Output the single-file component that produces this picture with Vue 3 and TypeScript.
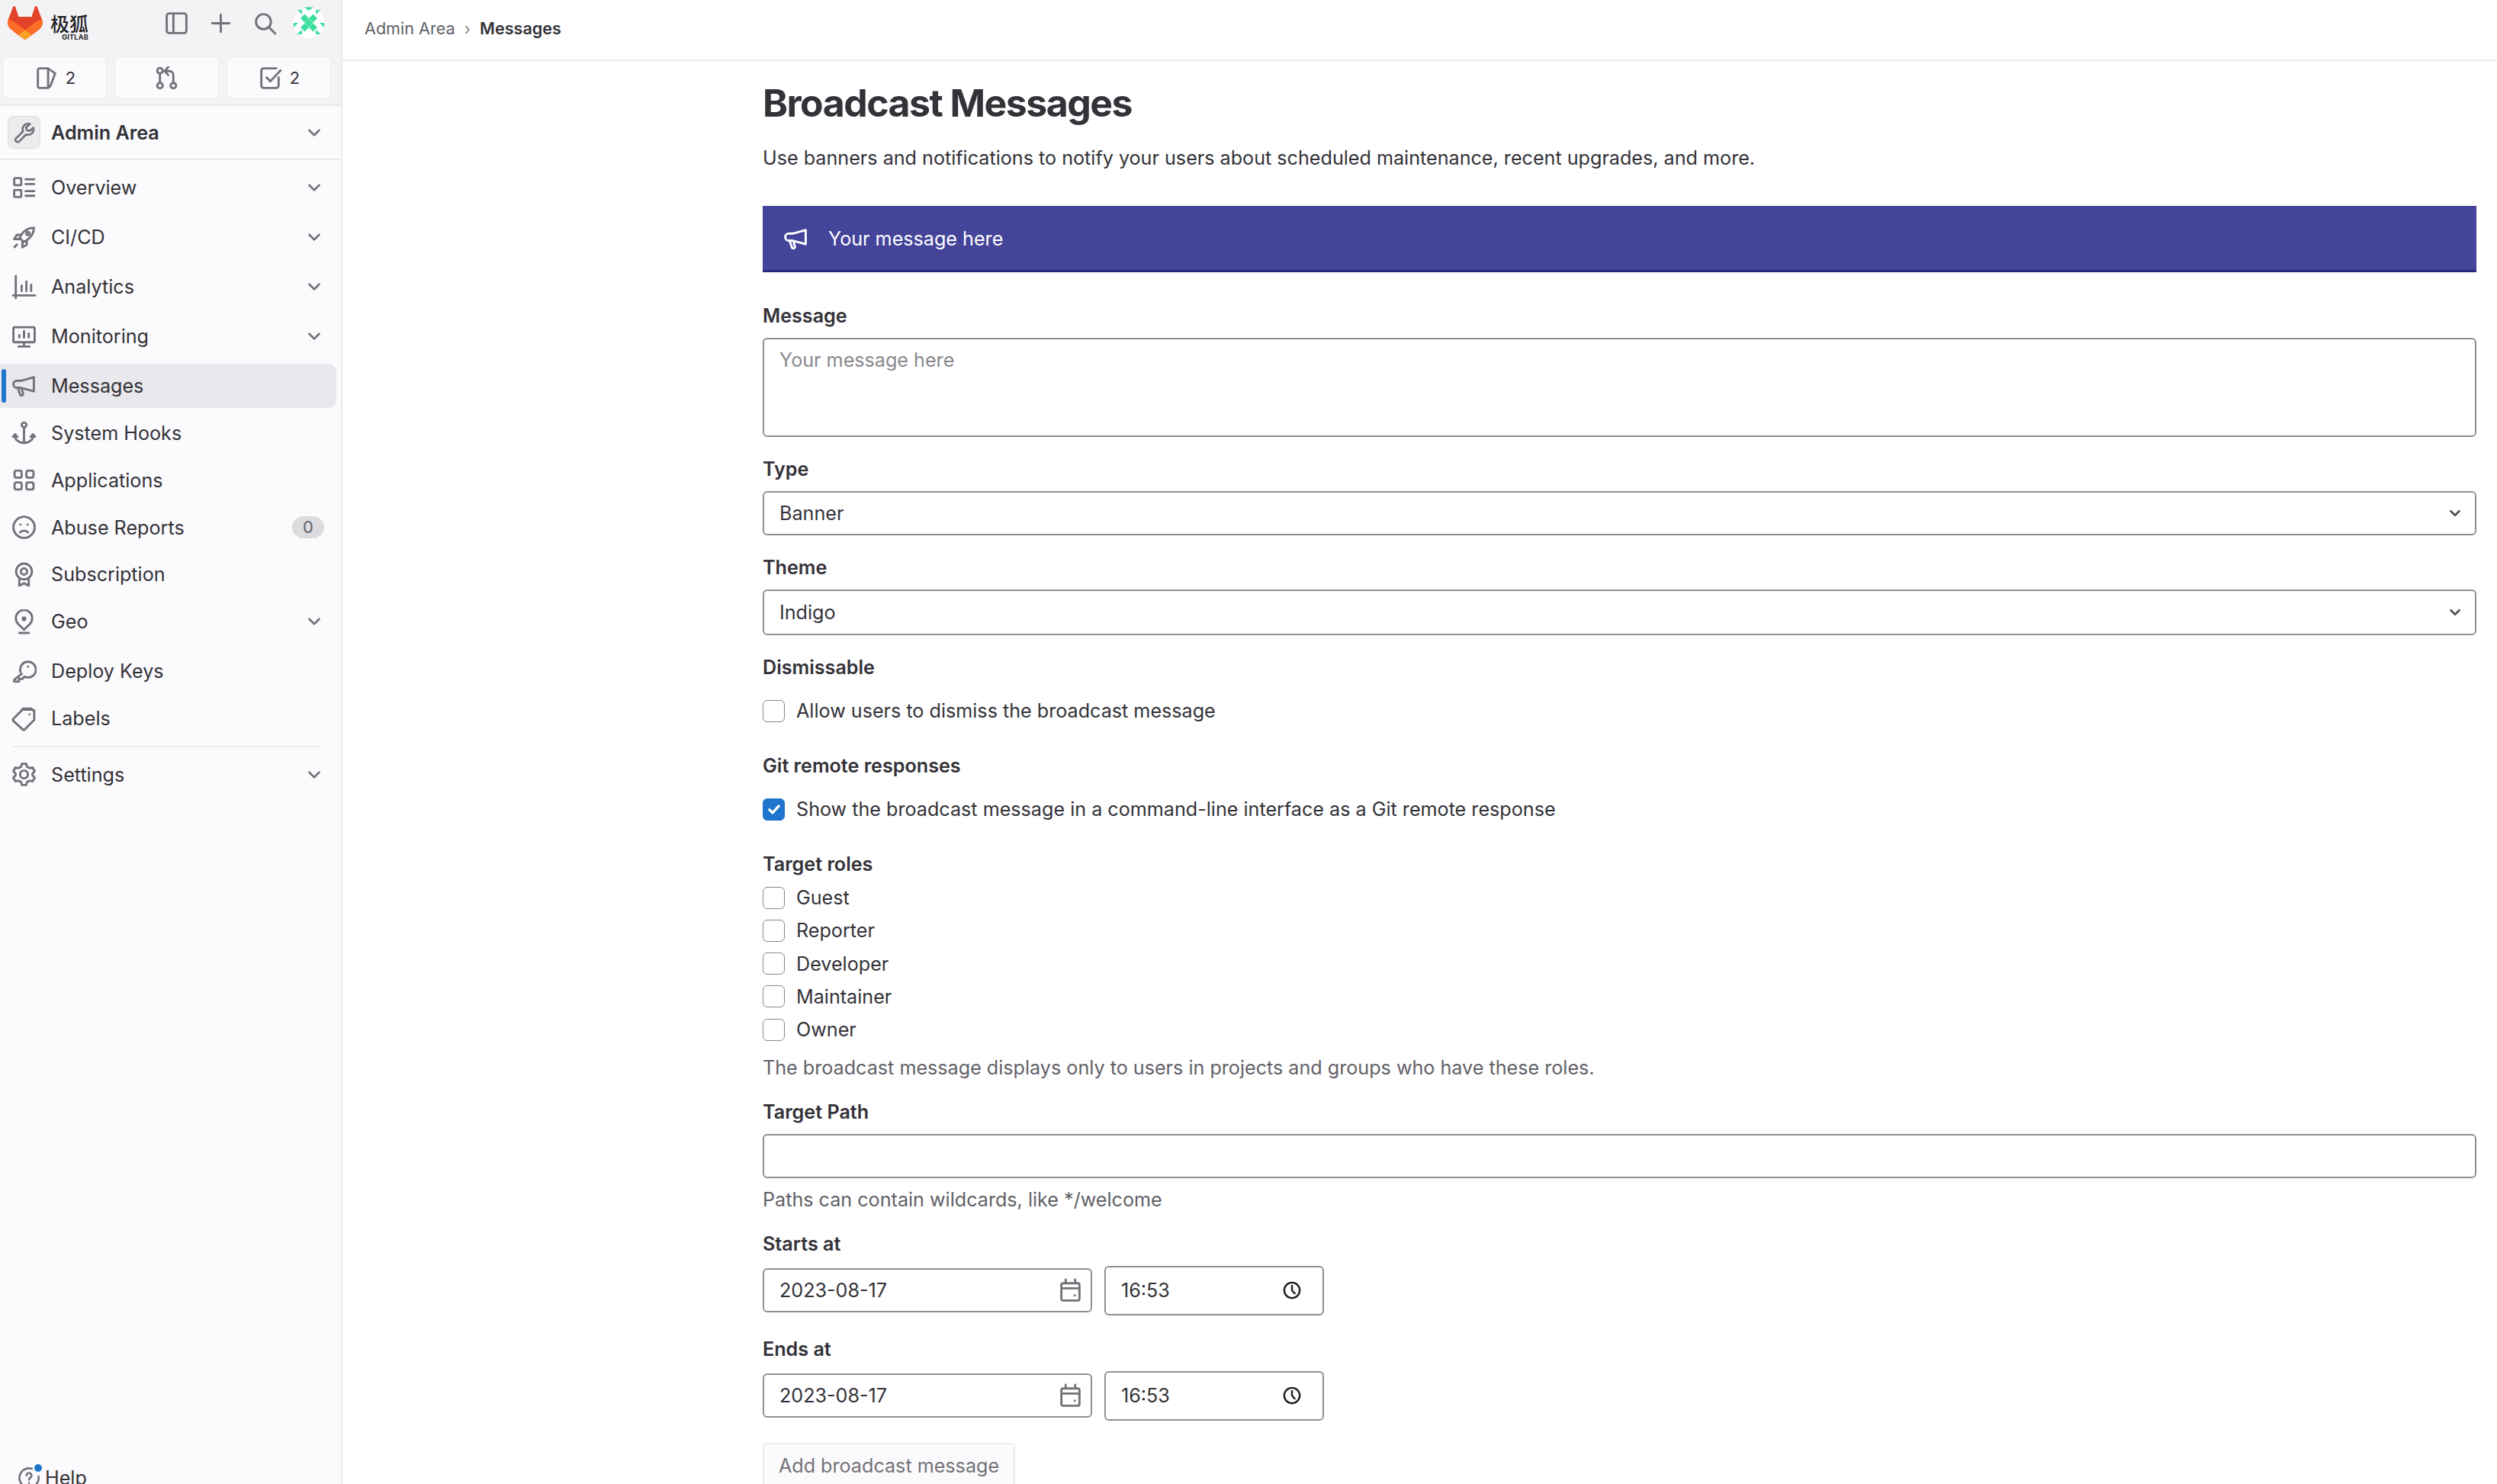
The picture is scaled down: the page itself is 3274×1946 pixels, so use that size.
<script setup lang="ts">
// small helpers so the icon table below stays readable
const rr = (x: number, y: number, w: number, h: number, r: number) =>
  `M${x + r} ${y}h${w - 2 * r}a${r} ${r} 0 0 1 ${r} ${r}v${h - 2 * r}a${r} ${r} 0 0 1-${r} ${r}h-${w - 2 * r}a${r} ${r} 0 0 1-${r}-${r}v-${h - 2 * r}a${r} ${r} 0 0 1 ${r}-${r}Z`
const circ = (cx: number, cy: number, r: number) =>
  `M${cx - r} ${cy}a${r} ${r} 0 1 0 ${2 * r} 0a${r} ${r} 0 1 0-${2 * r} 0Z`

const icons: Record<string, string> = {
  sidebar: rr(1.75, 1.75, 12.5, 12.5, 1.5) + 'M6 2v12',
  plus: 'M8 2.5v11M2.5 8h11',
  search: circ(7, 7, 4.75) + 'M10.5 10.5l4 4',
  issues: 'M3.75 1.75h5.5v12.5h-5.5a1 1 0 0 1-1-1V2.75a1 1 0 0 1 1-1ZM9.25 1.9l4.5 3-3 8-1.5 1.3',
  merge: circ(3.75, 3.25, 1.75) + circ(3.75, 12.75, 1.75) + circ(12.25, 12.75, 1.75) + 'M3.75 5v6M12.25 11V6a2.5 2.5 0 0 0-2.5-2.5H7.5M9 1 6.75 3.5 9 6',
  todo: 'M13.25 7.5v5.25a1.5 1.5 0 0 1-1.5 1.5h-8a1.5 1.5 0 0 1-1.5-1.5v-9.5a1.5 1.5 0 0 1 1.5-1.5h8M5.5 7.5 8 10l6.5-7',
  wrench: 'M10.5 1.75a3.75 3.75 0 0 0-3.4 5.3L2 12.1a1.6 1.6 0 0 0 2.2 2.2l5-5.1a3.75 3.75 0 0 0 5-4.7l-2.5 2.3-2-.5-.5-2L12 1.9a3.7 3.7 0 0 0-1.5-.15Z',
  overview: rr(1.75, 1.75, 4.5, 4.5, 0.5) + rr(1.75, 9.25, 4.5, 4.5, 0.5) + 'M9 2.5h5.5M9 5.5h5.5M9 10h5.5M9 13h5.5',
  rocket: 'M14.25 1.75c-3.5 0-6 1.5-8 4.5l-1 2 2.5 2.5 2-1c3-2 4.5-4.5 4.5-8ZM6.25 6.25H3.5L1.75 9h3.5M9.75 9.75v2.75L7 14.25v-3.5M2 14l1.5-1.5' + circ(10.5, 5.5, 1),
  chart: 'M2.75 1v14M1 13.25h14M6.5 7v3.5M9.5 4.5v6M12.5 6.5v4',
  monitor: rr(1.25, 2, 13.5, 9.5, 0.5) + 'M8 11.5v2.5M4.5 14.25h7M5 8.5V7M8 8.5V4.5M11 8.5V6',
  bullhorn: 'M14.25 2.25v9L6 9H3.5a2.25 2.25 0 0 1 0-4.5H6ZM4 9l1.5 4.25a1 1 0 0 0 1.9-.6L6.5 9.5',
  anchor: circ(8, 3, 1.5) + 'M8 4.5v10M2.25 9v1a5.75 4.5 0 0 0 11.5 0V9M1 10.5 2.25 9l1.5 1.5M12.25 10.5 13.75 9 15 10.5',
  apps: rr(2, 2, 4.5, 4.5, 1) + rr(9.5, 2, 4.5, 4.5, 1) + rr(2, 9.5, 4.5, 4.5, 1) + rr(9.5, 9.5, 4.5, 4.5, 1),
  sad: circ(8, 8, 6.75) + 'M5.5 11.25c1.2-1.5 3.8-1.5 5 0M5.75 6.25h.01M10.25 6.25h.01',
  license: circ(8, 6, 5) + circ(8, 6, 2) + 'M5 10.5V15l3-1.5 3 1.5v-4.5',
  location: 'M8 13 4.2 9.2a5.2 5.2 0 1 1 7.6 0ZM5 15h6' + circ(8, 6, 0.8),
  key: 'M6.5 9.5 1.75 13.25v1.25h3v-1.75h2.25l1.25-1.5a5 5 0 1 0-2.5-3M10.5 5h.01',
  labels: 'M1.25 8 7 2.25h6.5a1 1 0 0 1 1 1v5.5L8.5 14.75a1 1 0 0 1-1.4 0L1.25 9.4a1 1 0 0 1 0-1.4ZM6.5 2.5l1-1h5l1 1M11.5 5.25h.01',
  settings: 'M6.6 1.25h2.8l.5 1.9 1.6.9 1.9-.5 1.4 2.4-1.4 1.4v1.3l1.4 1.4-1.4 2.4-1.9-.5-1.6.9-.5 1.9H6.6l-.5-1.9-1.6-.9-1.9.5-1.4-2.4 1.4-1.4V7.35L1.2 5.95l1.4-2.4 1.9.5 1.6-.9Z' + circ(8, 8, 2.5),
  help: 'M10 1.6A6.75 6.75 0 1 0 14.7 7M6.25 6.25a1.75 1.75 0 1 1 2.7 1.5c-.6.4-.95.8-.95 1.5M8 11.5h.01',
  chevron: 'M4 6l4 4 4-4',
  calendar: rr(2.25, 3.25, 11.5, 11, 1) + 'M2.25 6.5h11.5M5 1v2.25M11 1v2.25M10.75 11h.01',
  clock: circ(8, 8, 6.25) + 'M8 4.25V8l2.25 2.5',
}

type NavItem = { label: string; icon: string; more?: boolean; active?: boolean; count?: number }

const navItems: NavItem[] = [
  { label: 'Overview', icon: 'overview', more: true },
  { label: 'CI/CD', icon: 'rocket', more: true },
  { label: 'Analytics', icon: 'chart', more: true },
  { label: 'Monitoring', icon: 'monitor', more: true },
  { label: 'Messages', icon: 'bullhorn', active: true },
  { label: 'System Hooks', icon: 'anchor' },
  { label: 'Applications', icon: 'apps' },
  { label: 'Abuse Reports', icon: 'sad', count: 0 },
  { label: 'Subscription', icon: 'license' },
  { label: 'Geo', icon: 'location', more: true },
  { label: 'Deploy Keys', icon: 'key' },
  { label: 'Labels', icon: 'labels' },
]

const roles = ['Guest', 'Reporter', 'Developer', 'Maintainer', 'Owner']

const schedule = [
  { label: 'Starts at', date: '2023-08-17', time: '16:53' },
  { label: 'Ends at', date: '2023-08-17', time: '16:53' },
]

const avatarDiamonds = [
  [404, 30], [398.5, 24], [409.5, 24], [398.5, 36], [409.5, 36],
]
const diamond = (x: number, y: number, s = 5.5) =>
  `${x},${y - s} ${x + s},${y} ${x},${y + s} ${x - s},${y}`
</script>

<template>
  <div class="page">
    <aside class="sidebar">
      <div class="sidebar-top">
        <div class="brand-row">
          <a class="brand">
            <svg class="tanuki" viewBox="0 0 25 24">
              <path d="m24.507 9.5-.034-.09L21.082.562a.896.896 0 0 0-1.694.091l-2.29 7.01H7.825L5.535.653a.898.898 0 0 0-1.694-.09L.451 9.411.416 9.5a6.297 6.297 0 0 0 2.09 7.278l.012.01.03.022 5.16 3.867 2.56 1.935 1.554 1.176a1.051 1.051 0 0 0 1.268 0l1.555-1.176 2.56-1.935 5.197-3.89.014-.01A6.297 6.297 0 0 0 24.507 9.5Z" fill="#e24329" />
              <path d="m24.507 9.5-.034-.09a11.44 11.44 0 0 0-4.56 2.051l-7.447 5.632 4.742 3.584 5.197-3.89.014-.01A6.297 6.297 0 0 0 24.507 9.5Z" fill="#fc6d26" />
              <path d="m7.707 20.677 2.56 1.935 1.555 1.176a1.051 1.051 0 0 0 1.268 0l1.555-1.176 2.56-1.935-4.743-3.584-4.755 3.584Z" fill="#fca326" />
              <path d="M5.01 11.461a11.43 11.43 0 0 0-4.56-2.05L.416 9.5a6.297 6.297 0 0 0 2.09 7.278l.012.01.03.022 5.16 3.867 4.745-3.584-7.444-5.632Z" fill="#fc6d26" />
            </svg>
            <span class="brand-text">
              <span class="brand-cn">极狐</span>
              <span class="brand-en">GITLAB</span>
            </span>
          </a>
          <div class="brand-actions">
            <svg class="icon" viewBox="0 0 16 16"><path :d="icons.sidebar" /></svg>
            <svg class="icon" viewBox="0 0 16 16"><path :d="icons.plus" /></svg>
            <svg class="icon" viewBox="0 0 16 16"><path :d="icons.search" /></svg>
            <svg class="avatar" viewBox="383 9 42 42">
              <circle cx="404" cy="30" r="21" fill="#fff" stroke="#e8e7eb" stroke-width="0.5" />
              <polygon v-for="(d, i) in avatarDiamonds" :key="i" :points="diamond(d[0], d[1])" fill="#3adf9e" />
              <polygon points="398,9.5 410,9.5 404,14" fill="#3adf9e" />
              <polygon points="389,13 395,13 395,19" fill="#3adf9e" />
              <polygon points="413,13 419,13 413,19" fill="#3adf9e" />
              <polygon points="384,30 390,30 384,36" fill="#3adf9e" />
              <polygon points="418,30 424,30 424,36" fill="#3adf9e" />
              <polygon points="388,45 395,45 395,39" fill="#3adf9e" />
              <polygon points="413,39 420,45 413,45" fill="#3adf9e" />
            </svg>
          </div>
        </div>
        <div class="counters">
          <button class="counter">
            <svg class="icon" viewBox="0 0 16 16"><path :d="icons.issues" /></svg><span>2</span>
          </button>
          <button class="counter">
            <svg class="icon" viewBox="0 0 16 16"><path :d="icons.merge" /></svg>
          </button>
          <button class="counter">
            <svg class="icon" viewBox="0 0 16 16"><path :d="icons.todo" /></svg><span>2</span>
          </button>
        </div>
      </div>

      <div class="context">
        <span class="context-icon">
          <svg class="icon" viewBox="0 0 16 16"><path :d="icons.wrench" /></svg>
        </span>
        <span class="context-title">Admin Area</span>
        <svg class="chev" viewBox="0 0 16 16"><path :d="icons.chevron" /></svg>
      </div>

      <nav class="nav">
        <a v-for="item in navItems" :key="item.label" class="nav-row"
          :class="{ 'is-active': item.active, 'has-more': item.more }">
          <svg class="icon" viewBox="0 0 16 16"><path :d="icons[item.icon]" /></svg>
          <span class="nav-label">{{ item.label }}</span>
          <svg v-if="item.more" class="chev" viewBox="0 0 16 16"><path :d="icons.chevron" /></svg>
          <span v-if="item.count !== undefined" class="badge">{{ item.count }}</span>
        </a>
        <div class="nav-divider"></div>
        <a class="nav-row has-more">
          <svg class="icon" viewBox="0 0 16 16"><path :d="icons.settings" /></svg>
          <span class="nav-label">Settings</span>
          <svg class="chev" viewBox="0 0 16 16"><path :d="icons.chevron" /></svg>
        </a>
      </nav>

      <div class="help">
        <svg class="icon" viewBox="0 0 16 16"><path :d="icons.help" /></svg>
        <span class="help-dot"></span>
        <span>Help</span>
      </div>
    </aside>

    <div class="main">
      <header class="topbar">
        <span class="crumb">Admin Area</span>
        <span class="crumb-sep">›</span>
        <span class="crumb-current">Messages</span>
      </header>

      <div class="content">
        <h1>Broadcast Messages</h1>
        <p class="lead">Use banners and notifications to notify your users about scheduled maintenance, recent upgrades, and more.</p>

        <div class="banner">
          <svg class="icon" viewBox="0 0 16 16"><path :d="icons.bullhorn" /></svg>
          <span>Your message here</span>
        </div>

        <label class="field-label first">Message</label>
        <textarea class="text-area" placeholder="Your message here"></textarea>

        <label class="field-label">Type</label>
        <div class="select-box">
          <span>Banner</span>
          <svg class="select-chev" viewBox="0 0 16 16"><path :d="icons.chevron" /></svg>
        </div>

        <label class="field-label">Theme</label>
        <div class="select-box tall">
          <span>Indigo</span>
          <svg class="select-chev" viewBox="0 0 16 16"><path :d="icons.chevron" /></svg>
        </div>

        <label class="field-label">Dismissable</label>
        <div class="check-row spaced">
          <span class="check"></span>
          <span>Allow users to dismiss the broadcast message</span>
        </div>

        <label class="field-label wide">Git remote responses</label>
        <div class="check-row spaced">
          <span class="check checked">
            <svg viewBox="0 0 16 16"><path d="M3.5 8.5 6.5 11.5 12.5 5" /></svg>
          </span>
          <span>Show the broadcast message in a command-line interface as a Git remote response</span>
        </div>

        <label class="field-label wide roles-label">Target roles</label>
        <div class="roles">
          <div v-for="role in roles" :key="role" class="check-row">
            <span class="check"></span>
            <span>{{ role }}</span>
          </div>
        </div>
        <p class="hint roles-hint">The broadcast message displays only to users in projects and groups who have these roles.</p>

        <label class="field-label path-label">Target Path</label>
        <input class="text-input" type="text" />
        <p class="hint path-hint">Paths can contain wildcards, like */welcome</p>

        <template v-for="(row, i) in schedule" :key="row.label">
          <label class="field-label" :class="i === 0 ? 'path-label' : 'ends-label'">{{ row.label }}</label>
          <div class="date-row">
            <div class="date-box">
              <span>{{ row.date }}</span>
              <svg class="icon" viewBox="0 0 16 16"><path :d="icons.calendar" /></svg>
            </div>
            <div class="time-box">
              <span>{{ row.time }}</span>
              <svg class="clock" viewBox="0 0 16 16"><path :d="icons.clock" /></svg>
            </div>
          </div>
        </template>

        <button class="submit" disabled>Add broadcast message</button>
      </div>
    </div>
  </div>
</template>

<style>
html,
body {
  margin: 0;
  background: #fff;
}
</style>

<style scoped>
.page {
  display: flex;
  height: 1946px;
  overflow: hidden;
  font-family: Inter, "Noto Sans", sans-serif;
  font-size: 25.15px;
  line-height: 36px;
  color: #333238;
}

.icon {
  width: 33px;
  height: 33px;
  flex: none;
  fill: none;
  stroke: #737278;
  stroke-width: 1.4;
  stroke-linecap: round;
  stroke-linejoin: round;
}

.chev {
  width: 26px;
  height: 26px;
  margin-left: auto;
  flex: none;
  fill: none;
  stroke: #737278;
  stroke-width: 1.6;
  stroke-linecap: round;
  stroke-linejoin: round;
}

/* sidebar */
.sidebar {
  width: 449px;
  flex: none;
  display: flex;
  flex-direction: column;
  background: #fbfafd;
  border-right: 2px solid #ececef;
  box-sizing: border-box;
}

.sidebar-top {
  background: #f3f2f5;
  height: 139px;
  border-bottom: 2px solid #e8e7eb;
  padding: 8px 5px 0 3px;
  box-sizing: border-box;
}

.brand-row {
  display: flex;
  align-items: center;
  height: 44px;
}

.brand {
  display: flex;
  align-items: center;
  gap: 10px;
  margin-left: 7px;
}

.tanuki {
  width: 46px;
  height: 44px;
}

.brand-text {
  display: flex;
  flex-direction: column;
  align-items: flex-end;
  width: 50px;
  color: #1f1e24;
  margin-top: 8px;
}

.brand-cn {
  font-family: "Noto Sans CJK SC", sans-serif;
  font-weight: 500;
  font-size: 25px;
  line-height: 28px;
}

.brand-en {
  font-size: 9px;
  font-weight: 700;
  line-height: 9px;
  letter-spacing: 0.3px;
}

.brand-actions {
  display: flex;
  align-items: center;
  margin-left: 99px;
  gap: 25px;
}

.brand-actions .avatar {
  width: 42px;
  height: 42px;
  margin-left: -5px;
}

.counters {
  display: flex;
  gap: 10px;
  margin-top: 22px;
}

.counter {
  width: 137px;
  height: 56px;
  display: flex;
  align-items: center;
  justify-content: center;
  gap: 9px;
  padding: 0;
  font: inherit;
  font-size: 22px;
  color: inherit;
  background: #fbfafd;
  border: 1px solid #ececef;
  border-radius: 8px;
}

.context {
  height: 71px;
  display: flex;
  align-items: center;
  gap: 14px;
  padding: 0 22px 0 10px;
  border-bottom: 2px solid #e8e7eb;
  box-sizing: border-box;
  font-weight: 600;
}

.context-icon {
  width: 43px;
  height: 43px;
  display: flex;
  align-items: center;
  justify-content: center;
  background: #ececef;
  border: 1px solid #dcdcde;
  border-radius: 8px;
  box-sizing: border-box;
}

.context-icon .icon {
  width: 30px;
  height: 30px;
}

.nav {
  padding: 7px 6px 0 0;
  display: flex;
  flex-direction: column;
}

.nav-row {
  position: relative;
  height: 58px;
  display: flex;
  align-items: center;
  gap: 19px;
  padding: 0 16px 0 15px;
  margin-bottom: 3.85px;
  border-radius: 0 10px 10px 0;
}

.nav-row.has-more {
  margin-bottom: 7px;
}

.nav-row.is-active {
  background: #e9e8ec;
}

.nav-row.is-active::before {
  content: "";
  position: absolute;
  left: 2px;
  top: 7px;
  bottom: 7px;
  width: 6px;
  border-radius: 3px;
  background: #1f75cb;
}

.badge {
  margin-left: auto;
  width: 42px;
  height: 29px;
  line-height: 29px;
  border-radius: 15px;
  background: #dcdcde;
  color: #626168;
  font-size: 22px;
  text-align: center;
}

.nav-divider {
  height: 2px;
  background: #ececef;
  margin: 3px 22px 7px 17px;
}

.help {
  position: relative;
  margin-top: auto;
  margin-bottom: -10px;
  height: 36px;
  display: flex;
  align-items: center;
  gap: 6px;
  padding-left: 23px;
}

.help .icon {
  width: 30px;
  height: 30px;
}

.help-dot {
  position: absolute;
  left: 45px;
  top: 0;
  width: 10px;
  height: 10px;
  border-radius: 50%;
  background: #1f75cb;
}

/* main column */
.main {
  flex: 1;
  min-width: 0;
}

.topbar {
  height: 80px;
  display: flex;
  align-items: center;
  gap: 12px;
  padding-left: 29px;
  padding-bottom: 4px;
  border-bottom: 2px solid #e8e7eb;
  box-sizing: border-box;
  font-size: 21.6px;
}

.crumb {
  color: #626168;
}

.crumb-sep {
  color: #89888d;
}

.crumb-current {
  font-weight: 600;
}

.content {
  padding: 0 27px 0 551px;
}

h1 {
  margin: 25px 0 0;
  font-size: 50px;
  line-height: 60px;
  font-weight: 700;
  letter-spacing: -1.55px;
}

.lead {
  margin: 24px 0 0;
}

.banner {
  margin-top: 45px;
  height: 87px;
  display: flex;
  align-items: center;
  gap: 26px;
  padding: 2px 0 0 27px;
  background: #43449a;
  border-bottom: 3px solid #2a2b7a;
  box-sizing: border-box;
  color: #fff;
}

.banner .icon {
  stroke: #fff;
}

.field-label {
  display: block;
  margin: 24px 0 11px;
  font-weight: 600;
}

.field-label.first {
  margin-top: 39px;
}

.field-label.wide {
  margin-top: 36px;
}

.field-label.roles-label {
  margin-bottom: 8px;
}

.field-label.path-label {
  margin-top: 22px;
}

.field-label.ends-label {
  margin-top: 26px;
}

.text-area,
.text-input,
.select-box,
.date-box,
.time-box {
  width: 100%;
  box-sizing: border-box;
  border: 2px solid #908f94;
  border-radius: 6px;
  background: #fff;
  font: inherit;
  color: inherit;
  outline: none;
}

.text-area {
  display: block;
  height: 130px;
  padding: 9px 20px;
  resize: none;
}

.text-area::placeholder {
  color: #89888d;
  opacity: 1;
}

.text-input {
  display: block;
  height: 58px;
}

.select-box {
  height: 58px;
  display: flex;
  align-items: center;
  justify-content: space-between;
  padding: 0 15px 0 20px;
}

.select-box.tall {
  height: 60px;
}

.select-chev {
  width: 22px;
  height: 22px;
  fill: none;
  stroke: #535158;
  stroke-width: 2;
  stroke-linecap: round;
  stroke-linejoin: round;
}

.check-row {
  display: flex;
  align-items: center;
  gap: 15px;
  height: 36px;
  margin-bottom: 7.3px;
}

.check-row.spaced {
  margin-top: 21px;
  margin-bottom: 0;
}

.check {
  width: 29px;
  height: 29px;
  box-sizing: border-box;
  border: 1px solid #89888d;
  border-radius: 6px;
  background: #fff;
  flex: none;
}

.check.checked {
  display: flex;
  align-items: center;
  justify-content: center;
  background: #1f75cb;
  border-color: #1f75cb;
}

.check.checked svg {
  width: 22px;
  height: 22px;
  fill: none;
  stroke: #fff;
  stroke-width: 2.4;
  stroke-linecap: round;
  stroke-linejoin: round;
}

.hint {
  margin: 0;
  color: #626168;
}

.roles-hint {
  margin-top: 13.5px;
}

.path-hint {
  margin-top: 10px;
}

.date-row {
  display: flex;
  align-items: center;
  gap: 16px;
}

.date-box {
  width: 432px;
  height: 58px;
  display: flex;
  align-items: center;
  justify-content: space-between;
  padding: 0 10px 0 20px;
}

.time-box {
  width: 288px;
  height: 65px;
  display: flex;
  align-items: center;
  justify-content: space-between;
  padding: 0 27px 0 20px;
}

.clock {
  width: 26px;
  height: 26px;
  fill: none;
  stroke: #1f1e24;
  stroke-width: 1.5;
  stroke-linecap: round;
  stroke-linejoin: round;
}

.submit {
  display: block;
  margin-top: 29px;
  width: 331px;
  height: 60px;
  padding: 0;
  font: inherit;
  color: #737278;
  background: #fbfafd;
  border: 2px solid #ececef;
  border-radius: 6px;
}
</style>
